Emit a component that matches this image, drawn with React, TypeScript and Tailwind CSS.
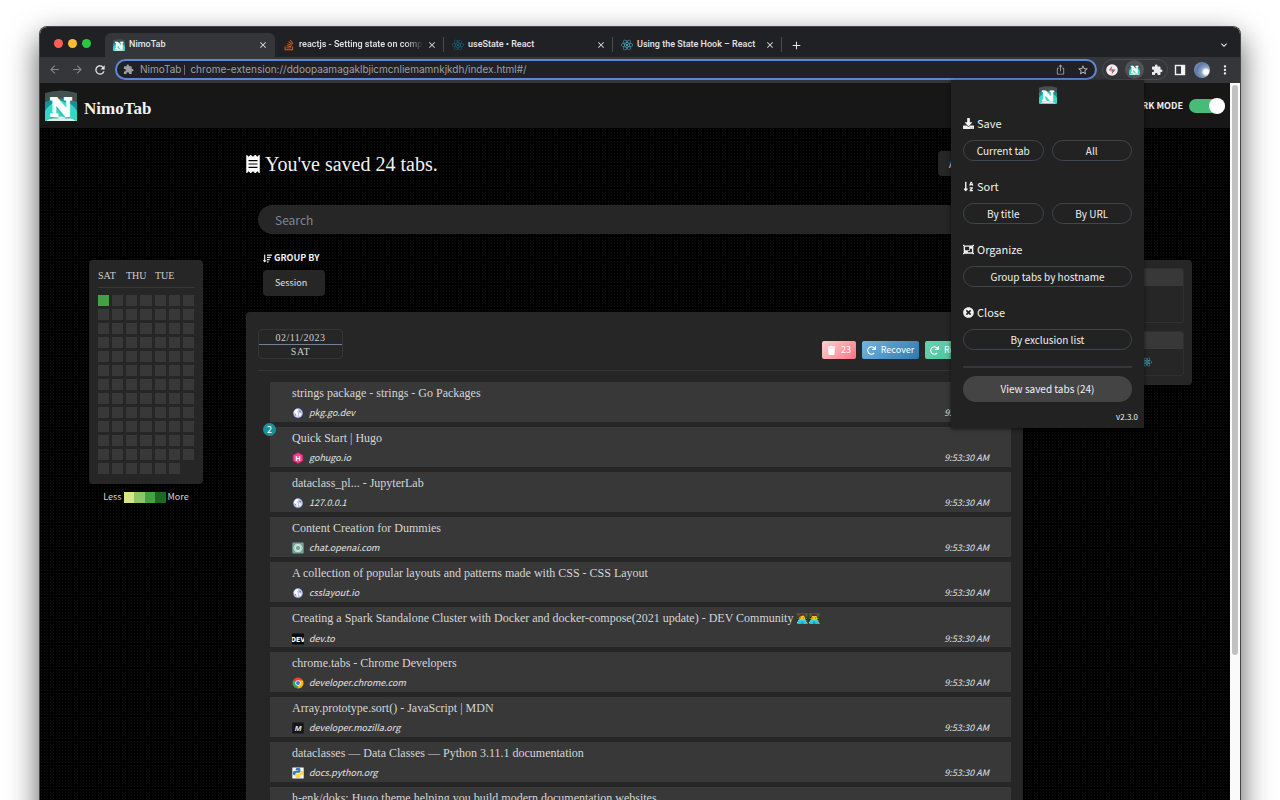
import React from "react";
import {
  FaDownload,
  FaObjectGroup,
  FaReact,
  FaReceipt,
  FaRedo,
  FaSortAlphaDown,
  FaSortAmountDown,
  FaStackOverflow,
  FaTimesCircle,
  FaTrash,
} from "react-icons/fa";
import {
  MdAdd,
  MdArrowBack,
  MdArrowForward,
  MdClose,
  MdExtension,
  MdIosShare,
  MdKeyboardArrowDown,
  MdMoreVert,
  MdRefresh,
  MdStarBorder,
} from "react-icons/md";

function Logo({ className }: { className: string }) {
  return (
    <svg viewBox="0 0 32 32" className={className} aria-hidden="true">
      <path d="M0 3Q16-2 32 3V31H0Z" fill="#41524f" />
      <path d="M0 12Q16 5 32 12V31H0Z" fill="#1b8f96" />
      <path d="M0 21Q5 12 16 11Q27 12 32 21V31H0Z" fill="#2fd9c4" />
      <path d="M1 31Q16 22 31 31Z" fill="#d9f3ef" />
      <text
        x="16"
        y="27.5"
        textAnchor="middle"
        fontSize="24"
        fontWeight="700"
        fontFamily="DejaVu Serif, serif"
        fill="#17816f"
        stroke="#17816f"
        strokeWidth="2"
        opacity=".35"
      >
        N
      </text>
      <text
        x="16"
        y="26"
        textAnchor="middle"
        fontSize="24"
        fontWeight="700"
        fontFamily="DejaVu Serif, serif"
        fill="#fff"
        stroke="#fff"
        strokeWidth="2"
      >
        N
      </text>
    </svg>
  );
}

function Globe() {
  return (
    <svg viewBox="0 0 12 12" className="size-3" aria-hidden="true">
      <circle cx="6" cy="6.3" r="5" fill="#7076b4" />
      <circle cx="6" cy="6.1" r="4.5" fill="#c3c9ea" />
      <path d="M2 5.2L3.6 2.6L5.6 1.8L6.4 3.6L4.8 4.8L6 6.2L5.6 8L6.4 10L4 9L3 7Z" fill="#fff" />
      <path d="M7.4 3.2L9 4.4L8.6 5.6L7.4 5Z" fill="#6d76b8" />
      <path d="M3 6.4L4.2 7.6L4.4 9L3.2 8Z" fill="#6d76b8" />
      <path d="M7 6.2L9.6 6.8L8.6 9L7.2 8.6Z" fill="#fff" />
    </svg>
  );
}

function Hugo() {
  return (
    <svg viewBox="0 0 12 12" className="size-3" aria-hidden="true">
      <path d="M6 .6L10.8 3.3V8.7L6 11.4L1.2 8.7V3.3Z" fill="#ff4088" stroke="#d6177f" strokeWidth=".8" />
      <text
        x="6"
        y="8.6"
        textAnchor="middle"
        fontSize="7"
        fontStyle="normal"
        fontWeight="700"
        fontFamily="Liberation Sans, sans-serif"
        fill="#fff"
      >
        H
      </text>
    </svg>
  );
}

function ChatGpt() {
  return (
    <svg viewBox="0 0 12 12" className="size-3" aria-hidden="true">
      <rect x=".3" y=".5" width="11.4" height="11" rx="1" fill="#6fa597" />
      <g fill="none" stroke="#e6f2ee" strokeWidth=".7">
        <ellipse cx="6" cy="6" rx="4.2" ry="2.4" />
        <ellipse cx="6" cy="6" rx="4.2" ry="2.4" transform="rotate(60 6 6)" />
        <ellipse cx="6" cy="6" rx="4.2" ry="2.4" transform="rotate(120 6 6)" />
      </g>
    </svg>
  );
}

function DevTo() {
  return (
    <svg viewBox="0 0 12 12" className="size-3" aria-hidden="true">
      <rect y=".5" width="12" height="11" fill="#0a0a0a" />
      <text
        x="6"
        y="8.6"
        textAnchor="middle"
        fontSize="7"
        fontStyle="normal"
        fontWeight="700"
        fontFamily="Liberation Sans Narrow, DejaVu Sans Condensed, sans-serif"
        fill="#fff"
      >
        DEV
      </text>
    </svg>
  );
}

function Chrome() {
  return (
    <svg viewBox="0 0 12 12" className="size-3" aria-hidden="true">
      <path d="M6 6L1.24 3.25A5.5 5.5 0 0 1 10.76 3.25Z" fill="#ea4335" />
      <path d="M6 6L10.76 3.25A5.5 5.5 0 0 1 6 11.5Z" fill="#fbbc04" />
      <path d="M6 6L6 11.5A5.5 5.5 0 0 1 1.24 3.25Z" fill="#34a853" />
      <path d="M6 3.4H10.85L8.3 7.3Z" fill="#fbbc04" />
      <circle cx="6" cy="6" r="2.7" fill="#fff" />
      <circle cx="6" cy="6" r="2" fill="#3b78e7" />
    </svg>
  );
}

function Mdn() {
  return (
    <svg viewBox="0 0 12 12" className="size-3" aria-hidden="true">
      <rect x=".3" y=".5" width="11.4" height="11" fill="#15141a" />
      <text
        x="6"
        y="9"
        textAnchor="middle"
        fontSize="8"
        fontWeight="700"
        fontStyle="italic"
        fontFamily="Liberation Sans, sans-serif"
        fill="#e8e8e8"
      >
        M
      </text>
    </svg>
  );
}

function Python() {
  return (
    <svg viewBox="0 0 12 12" className="size-3" aria-hidden="true">
      <rect x=".3" y=".5" width="11.4" height="11" fill="#f4f6f7" />
      <path d="M6 1C4.4 1 3.7 1.5 3.7 2.4V3.6H6.2V4H2.5C1.4 4 .8 4.8 .8 6.1S1.4 8.2 2.4 8.2H3.4V7C3.4 6 4.1 5.7 5 5.7H7.3C8 5.7 8.4 5.2 8.4 4.5V2.4C8.4 1.4 7.4 1 6 1Z" fill="#3c78a9" />
      <path d="M6 11.2C7.6 11.2 8.4 10.7 8.4 9.8V8.6H5.9V8.2H9.6C10.6 8.2 11.3 7.4 11.3 6.1S10.6 4 9.7 4H8.8V5.2C8.8 6.1 8.1 6.5 7.2 6.5H4.9C4.2 6.5 3.7 7 3.7 7.7V9.8C3.7 10.8 4.7 11.2 6 11.2Z" fill="#ffd845" />
    </svg>
  );
}

type SavedTab = { title: string; emoji?: string; host: string; icon: React.ReactNode; badge?: number };

const savedTabs: SavedTab[] = [
  { title: "strings package - strings - Go Packages", host: "pkg.go.dev", icon: <Globe /> },
  { title: "Quick Start | Hugo", host: "gohugo.io", icon: <Hugo />, badge: 2 },
  { title: "dataclass_pl... - JupyterLab", host: "127.0.0.1", icon: <Globe /> },
  { title: "Content Creation for Dummies", host: "chat.openai.com", icon: <ChatGpt /> },
  {
    title: "A collection of popular layouts and patterns made with CSS - CSS Layout",
    host: "csslayout.io",
    icon: <Globe />,
  },
  {
    title: "Creating a Spark Standalone Cluster with Docker and docker-compose(2021 update) - DEV Community ",
    emoji: "👩‍💻👨‍💻",
    host: "dev.to",
    icon: <DevTo />,
  },
  { title: "chrome.tabs - Chrome Developers", host: "developer.chrome.com", icon: <Chrome /> },
  { title: "Array.prototype.sort() - JavaScript | MDN", host: "developer.mozilla.org", icon: <Mdn /> },
  { title: "dataclasses — Data Classes — Python 3.11.1 documentation", host: "docs.python.org", icon: <Python /> },
  { title: "h-enk/doks: Hugo theme helping you build modern documentation websites", host: "github.com", icon: <Globe /> },
];

function BrowserTab({ title, icon, active, faded }: { title: string; icon: React.ReactNode; active?: boolean; faded?: boolean }) {
  return (
    <div
      className={
        active
          ? "flex h-6 w-[170px] items-center rounded-t-md bg-[#35363a] pr-[7px] pl-2"
          : "flex h-6 w-[169px] items-center border-r border-[#4a4c50] pr-[6px] pl-2 [border-image:linear-gradient(transparent_20%,#4a4c50_20%,#4a4c50_75%,transparent_75%)_1]"
      }
    >
      {icon}
      <span
        className={
          faded
            ? "ml-1 flex-1 whitespace-nowrap [mask-image:linear-gradient(to_right,black_85%,transparent)]"
            : "ml-1 flex-1 whitespace-nowrap"
        }
      >
        {title}
      </span>
      <button aria-label={"Close " + title} className="ml-1">
        <MdClose className="size-[10px]" />
      </button>
    </div>
  );
}

function TabStrip() {
  return (
    <div className="flex h-[30px] items-end bg-[#202124] pr-[10px] font-['Roboto',sans-serif] text-[9px] font-medium text-[#e4e5e8]">
      <div className="flex h-6 w-[65px] shrink-0 items-center gap-[5px] pb-1 pl-[14px]">
        <span className="size-[9px] rounded-full bg-[#ff5f57]" />
        <span className="size-[9px] rounded-full bg-[#febc2e]" />
        <span className="size-[9px] rounded-full bg-[#28c840]" />
      </div>
      <BrowserTab title="NimoTab" active icon={<Logo className="size-3" />} />
      <BrowserTab
        title="reactjs - Setting state on comp"
        faded
        icon={<FaStackOverflow className="size-3 text-[#d2622a]" />}
      />
      <BrowserTab title="useState • React" icon={<FaReact className="size-3 text-[#12688a]" />} />
      <BrowserTab title="Using the State Hook – React" icon={<FaReact className="size-3 text-[#4fb4cf]" />} />
      <button aria-label="New tab" className="flex h-6 items-center pl-2">
        <MdAdd className="size-[13px]" />
      </button>
      <button aria-label="Search tabs" className="ml-auto flex h-6 items-center">
        <MdKeyboardArrowDown className="size-3" />
      </button>
    </div>
  );
}

function Toolbar() {
  return (
    <div className="flex h-[26px] items-center bg-[#35363a] pr-2 pb-px pl-2 font-['Inter',sans-serif] text-[#e8eaed]">
      <button aria-label="Back" className="text-[#85878b]">
        <MdArrowBack className="size-[13px]" />
      </button>
      <button aria-label="Forward" className="ml-[10px] text-[#85878b]">
        <MdArrowForward className="size-[13px]" />
      </button>
      <button aria-label="Reload" className="ml-[9px]">
        <MdRefresh className="size-[14px]" />
      </button>
      <div className="ml-2 flex h-[21px] flex-1 items-center rounded-full border-2 border-[#5f86d6] bg-[#202124] px-[6px] text-[10px] text-[#9aa0a6]">
        <MdExtension className="size-[11px]" />
        <span className="ml-[6px]">NimoTab</span>
        <span className="mr-[5px] ml-[3px] h-[10px] w-px bg-[#6b6e73]" />
        <span>chrome-extension://ddoopaamagaklbjicmcnliemamnkjkdh/index.html#/</span>
        <button aria-label="Share" className="ml-auto">
          <MdIosShare className="size-[11px]" />
        </button>
        <button aria-label="Bookmark" className="ml-[11px] text-[#c4c7cb]">
          <MdStarBorder className="size-3" />
        </button>
      </div>
      <div className="ml-[5px] flex h-[21px] items-center rounded-full border border-[#4b4c50] pr-1 pl-[3px]">
        <svg viewBox="0 0 12 12" className="size-3" role="img" aria-label="Extension">
          <circle cx="6" cy="6" r="5.8" fill="#f4f2f3" />
          <path d="M6.4 1.6L2.6 6.6H5.6L4.6 8.6Z" fill="#e2504e" />
          <path d="M5.6 10.4L9.6 5.4H6.4L7.2 3.4Z" fill="#e2504e" />
          <path d="M5.2 5.2L8.6 6L5.8 8Z" fill="#4d7bc4" />
        </svg>
        <span className="ml-[7px] flex size-[19px] items-center justify-center rounded-full bg-[#525357]">
          <Logo className="size-[11px]" />
        </span>
        <MdExtension className="ml-[7px] size-3" />
      </div>
      <svg viewBox="0 0 12 12" className="ml-[6px] size-3" role="img" aria-label="Side panel">
        <rect x="1.5" y="1.5" width="9" height="9" fill="none" stroke="#f1f3f4" strokeWidth="1.4" />
        <rect x="7" y="1.5" width="4" height="9" fill="#f1f3f4" />
      </svg>
      <span className="ml-2 size-4 rounded-full bg-[radial-gradient(circle_at_75%_62%,#fff_0_14%,#8ca3c6_30%,#5d7ba8_60%,#8c9db8)]" />
      <button aria-label="Menu" className="ml-2">
        <MdMoreVert className="size-[14px]" />
      </button>
    </div>
  );
}

function Header() {
  return (
    <header className="flex h-[45px] items-center bg-[#171717] pr-[5px] pl-[5px]">
      <Logo className="size-8" />
      <h1 className="ml-[7px] pt-[6px] font-['Liberation_Serif',serif] text-[17px] leading-5 font-bold text-[#f2f2f2]">NimoTab</h1>
      <label className="ml-auto flex items-center gap-[6px] text-[9px] font-bold text-[#f0f0f0]">
        DARK MODE
        <input
          type="checkbox"
          defaultChecked
          className="relative h-[14px] w-9 appearance-none rounded-full bg-[#48bb78] before:absolute before:-top-px before:right-0 before:size-4 before:rounded-full before:bg-white"
        />
      </label>
    </header>
  );
}

const heatCells = Array.from({ length: 90 }, (_, i) => i);

function Heatmap() {
  return (
    <aside className="pt-[132px] pl-[49px]">
      <div className="w-[114px] rounded-sm bg-[#262626] px-[9px] pb-[10px]">
        <div className="grid h-7 grid-cols-[28px_29px_1fr] items-center border-b border-[#383838] pt-[3px] font-['Liberation_Serif',serif] text-[10px] text-[#cfcfcf]">
          <span>SAT</span>
          <span>THU</span>
          <span>TUE</span>
        </div>
        <div className="mt-[7px] grid grid-cols-7 gap-[3px]">
          {heatCells.map((i) => (
            <span key={i} className={i === 0 ? "h-[11px] bg-[#43a047]" : "h-[11px] bg-[#383838]"} />
          ))}
        </div>
      </div>
      <div className="mt-[6px] flex w-[114px] items-center justify-center gap-[2px] text-[9px] leading-[14px] text-[#d6d6d6]">
        <span>Less</span>
        <span className="flex h-[11px] w-[42px]">
          <span className="flex-1 bg-[#d6e685]" />
          <span className="flex-1 bg-[#8cc665]" />
          <span className="flex-1 bg-[#44a340]" />
          <span className="flex-1 bg-[#1e6823]" />
        </span>
        <span>More</span>
      </div>
    </aside>
  );
}

function TabRow({ tab }: { tab: SavedTab }) {
  return (
    <li className="relative h-10 bg-[#383838] pr-[22px] pl-[22px] pt-1">
      {tab.badge && (
        <span className="absolute -top-1 -left-[7px] flex size-[13px] items-center justify-center rounded-full bg-[#1b9197] text-[9px] leading-none text-white">
          {tab.badge}
        </span>
      )}
      <a href="#/" className="block font-['Liberation_Serif',serif] text-[12px] leading-[14px] whitespace-nowrap text-[#d6d6d6]">
        {tab.title}
        {tab.emoji && <span className="text-[10px]">{tab.emoji}</span>}
      </a>
      <div className="mt-[7px] flex h-3 items-center text-[9px] leading-3 text-[#e4e4e4] italic">
        {tab.icon}
        <span className="ml-[5px]">{tab.host}</span>
        <time className="ml-auto">9:53:30 AM</time>
      </div>
    </li>
  );
}

function SessionCard() {
  return (
    <section className="mt-4 rounded-t-sm bg-[#262626] px-3 pt-[17px]">
      <div className="flex items-end border-b border-[#353535] pb-[11px]">
        <div className="w-[85px] rounded-sm border border-[#353535] text-center font-['Liberation_Serif',serif] text-[10px] leading-[13px] tracking-wider text-[#cfcfcf]">
          <div className="border-b border-[#718096] pt-px">02/11/2023</div>
          <div>SAT</div>
        </div>
        <div className="ml-auto flex h-[18px] gap-[6px] text-[9px] text-white">
          <button className="flex w-[34px] items-center justify-center gap-[5px] rounded-xs bg-linear-135 from-[#fed0d2] to-[#ff7183]">
            <FaTrash className="size-[9px]" />
            23
          </button>
          <button className="flex w-[57px] items-center justify-center gap-[5px] rounded-xs bg-linear-135 from-[#70b5e4] to-[#2c7ab0]">
            <FaRedo className="size-[9px]" />
            Recover
          </button>
          <button className="flex w-[86px] items-center gap-[5px] rounded-xs bg-linear-135 from-[#65d3b1] to-[#2fae85] pl-[5px]">
            <FaRedo className="size-[9px]" />
            Recover all
          </button>
        </div>
      </div>
      <ul className="mt-[11px] flex flex-col gap-[5px] pl-3">
        {savedTabs.map((tab) => (
          <TabRow key={tab.title} tab={tab} />
        ))}
      </ul>
    </section>
  );
}

function SidePanel() {
  return (
    <aside className="pt-[132px] pr-[38px] pl-[43px]">
      <div className="flex flex-col gap-2 rounded-sm bg-[#262626] p-2 pb-[9px]">
        <div className="h-[55px] rounded-xs border border-[#303030]">
          <div className="h-[17px] rounded-t-xs bg-[#383838]" />
        </div>
        <div className="h-[45px] rounded-xs border border-[#303030]">
          <div className="h-[17px] rounded-t-xs bg-[#383838]" />
          <div className="flex h-[26px] items-center justify-end pr-[31px]">
            <FaReact className="size-[10px] text-[#4fa9c2]" />
          </div>
        </div>
      </div>
    </aside>
  );
}

function Section({ icon, label, children }: { icon: React.ReactNode; label: string; children: React.ReactNode }) {
  return (
    <section className="mb-4">
      <h2 className="flex h-5 items-center gap-[3px] pb-[2px] text-[11px] leading-5">
        {icon}
        {label}
      </h2>
      <div className="mt-[6px] flex gap-2">{children}</div>
    </section>
  );
}

function PillButton({ children }: { children: React.ReactNode }) {
  return (
    <button className="flex h-[21px] flex-1 items-center justify-center rounded-full border border-[#3f444f] text-[10px] leading-none">
      {children}
    </button>
  );
}

function Popup() {
  return (
    <div className="absolute top-[53px] right-24 w-[193px] bg-[#222] px-3 pt-[6px] pb-1 text-[#f1f1f1] shadow-[0_1px_4px_rgba(0,0,0,0.6)]">
      <Logo className="mx-auto mb-[10px] size-[18px]" />
      <Section label="Save" icon={<FaDownload className="size-[11px]" />}>
        <PillButton>Current tab</PillButton>
        <PillButton>All</PillButton>
      </Section>
      <Section label="Sort" icon={<FaSortAlphaDown className="size-[11px]" />}>
        <PillButton>By title</PillButton>
        <PillButton>By URL</PillButton>
      </Section>
      <Section label="Organize" icon={<FaObjectGroup className="size-[11px]" />}>
        <PillButton>Group tabs by hostname</PillButton>
      </Section>
      <Section label="Close" icon={<FaTimesCircle className="size-[11px]" />}>
        <PillButton>By exclusion list</PillButton>
      </Section>
      <div className="border-t-2 border-[#34353d] pt-2">
        <button className="flex h-[26px] w-full items-center justify-center rounded-full bg-[#444] text-[10px] leading-none">
          View saved tabs (24)
        </button>
      </div>
      <p className="-mr-[6px] mt-2 text-right text-[8px] leading-[14px]">v2.3.0</p>
    </div>
  );
}

function Main() {
  return (
    <div className="grid flex-1 grid-cols-[206px_1fr_207px] items-start bg-black bg-[radial-gradient(#111_1px,transparent_1px)] bg-[size:3px_3px]">
      <Heatmap />
      <main className="pt-[23px]">
        <div className="flex h-[25px] items-center">
          <FaReceipt className="h-[18px] w-[14px] text-white" />
          <h2 className="ml-[5px] font-['Liberation_Serif',serif] text-[20px] leading-6 text-[#f2f2f2]">You've saved 24 tabs.</h2>
          <button className="ml-auto h-[25px] w-[85px] rounded-sm bg-[#262626] pl-[11px] text-left text-[10px] text-[#e2e2e2]">Actions</button>
        </div>
        <div className="px-3 pt-[29px]">
          <input
            type="search"
            aria-label="Search"
            placeholder="Search"
            className="block h-[29px] w-full rounded-full bg-[#262626] px-[17px] text-[12px] text-white outline-none placeholder:text-[#7d8798]"
          />
        </div>
        <div className="px-[17px] pt-[17px]">
          <div className="flex h-[14px] items-center gap-[2px] text-[9px] font-bold text-[#f2f2f2]">
            <FaSortAmountDown className="size-[9px]" />
            GROUP BY
          </div>
          <button className="mt-[5px] h-[26px] w-[62px] rounded-sm bg-[#262626] pl-3 text-left text-[9px] text-[#e2e2e2]">Session</button>
        </div>
        <SessionCard />
      </main>
      <SidePanel />
    </div>
  );
}

export default function App() {
  return (
    <div className="h-screen overflow-hidden bg-white px-[39px] pt-[26px] font-['Noto_Sans_CJK_SC',sans-serif]">
      <div className="relative rounded-t-lg border border-b-0 border-[#454746] shadow-[0_12px_30px_rgba(0,0,0,0.65)]">
        <div className="overflow-hidden rounded-t-[7px]">
          <TabStrip />
          <Toolbar />
          <div className="flex">
            <div className="flex min-w-0 flex-1 flex-col">
              <Header />
              <Main />
            </div>
            <div className="w-[10px] bg-[#fafafa] px-[2px] pt-[2px]">
              <div className="h-[570px] rounded-full bg-[#c1c1c1]" />
            </div>
          </div>
        </div>
        <Popup />
      </div>
    </div>
  );
}
